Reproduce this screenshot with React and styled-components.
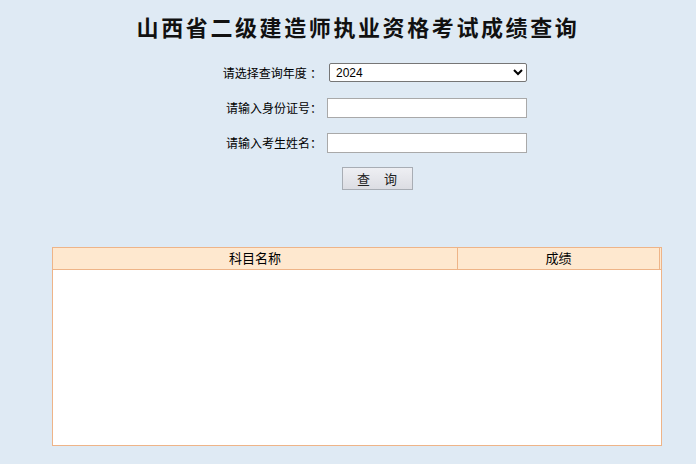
import styled, { createGlobalStyle } from 'styled-components'

const GlobalStyle = createGlobalStyle`
body{
    margin: 0;
    background: #dfeaf4;
    font-family: "Liberation Sans", "Noto Sans CJK SC", sans-serif;
    color: #000;
}
`

const Page = styled.div`
width: 696px;
height: 464px;
overflow: hidden;
`

const Title = styled.h1`
margin: 0;
padding-top: 14px;
height: 30px;
text-align: center;
font-family: "Liberation Serif", "Noto Sans CJK SC", serif;
font-size: 22px;
line-height: 30px;
letter-spacing: 2.6px;
font-weight: bold;
color: #111;
padding-left: 20px;
`

const Form = styled.div`
display: grid;
grid-template-columns: 98px 200px;
column-gap: 5px;
row-gap: 0;
margin: 11px 0 0 224px;
`

const Label = styled.label`
font-size: 12px;
height: 35px;
display: flex;
align-items: center;
justify-content: flex-end;
white-space: nowrap;
`

const Field = styled.div`
height: 35px;
display: flex;
align-items: center;
margin-left: ${({shift}) => shift || 0}px;
`

const Select = styled.select`
width: 200px;
height: 19px;
font-size: 12px;
font-family: "Liberation Sans", sans-serif;
border: 1px solid #767676;
border-radius: 2px;
background: #fff;
padding: 0 0 0 2px;
color: #000;
`

const Input = styled.input`
width: 200px;
height: 20px;
box-sizing: border-box;
border: 1px solid #a9a9a9;
background: #fff;
`

const ButtonRow = styled.div`
grid-column: 1 / 3;
display: flex;
justify-content: center;
padding: 3px 0 0 3px;
height: 30px;
align-items: center;
`

const Button = styled.button`
width: 71px;
height: 23px;
border: 1px solid #a8adb4;
background: linear-gradient(#eeeff3, #dcdde3);
font-size: 13px;
font-family: "Noto Sans CJK SC", sans-serif;
letter-spacing: 14px;
padding: 0 0 0 14px;
color: #222;
`

const Table = styled.div`
margin: 54px 0 0 52px;
width: 608px;
height: 197px;
border: 1px solid #eeb488;
background: #fff;
`

const Head = styled.div`
display: grid;
grid-template-columns: 404px 203px;
background: #fee8cf;
border-bottom: 1px solid #eeb488;
`

const HeadCell = styled.div`
font-size: 13px;
height: 21px;
line-height: 22px;
text-align: center;
border-left: ${({divided}) => (divided ? '1px solid #eeb488' : 'none')};
border-right: ${({last}) => (last ? '1px solid #eeb488' : 'none')};
`

export default function App() {
    return (
        <Page>
            <GlobalStyle />
            <Title>山西省二级建造师执业资格考试成绩查询</Title>
            <Form>
                <Label>请选择查询年度 ：</Label>
                <Field shift={2}>
                    <Select defaultValue="2024">
                        <option value="2024">2024</option>
                    </Select>
                </Field>
                <Label>请输入身份证号：</Label>
                <Field>
                    <Input />
                </Field>
                <Label>请输入考生姓名：</Label>
                <Field>
                    <Input />
                </Field>
                <ButtonRow>
                    <Button>查询</Button>
                </ButtonRow>
            </Form>
            <Table>
                <Head>
                    <HeadCell>科目名称</HeadCell>
                    <HeadCell divided last>成绩</HeadCell>
                </Head>
            </Table>
        </Page>
    )
}
